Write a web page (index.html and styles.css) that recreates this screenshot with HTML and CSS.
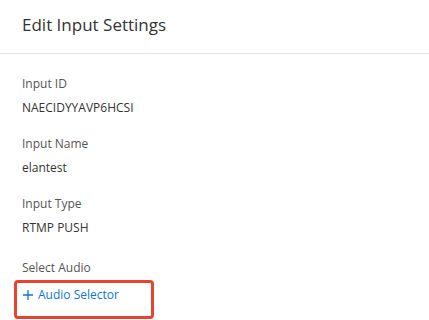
FILE: index.html
```html
<!DOCTYPE html>
<html lang="en">
<head>
    <meta charset="UTF-8">
    <meta name="viewport" content="width=device-width, initial-scale=1.0">
    <title>Edit Input Settings</title>
    <link rel="stylesheet" href="styles.css">
</head>
<body>
    <div class="panel">
        <div class="panel-header">
            <h2 class="panel-title">Edit Input Settings</h2>
        </div>
        <div class="panel-body">
            <div class="field">
                <div class="field-label">Input ID</div>
                <div class="field-value">NAECIDYYAVP6HCSI</div>
            </div>
            <div class="field">
                <div class="field-label">Input Name</div>
                <div class="field-value">elantest</div>
            </div>
            <div class="field">
                <div class="field-label">Input Type</div>
                <div class="field-value">RTMP PUSH</div>
            </div>
            <div class="field field-audio">
                <div class="field-label">Select Audio</div>
                <div class="highlight">
                    <a class="add-link" href="#">
                        <svg class="plus" width="10" height="10" viewBox="0 0 10 10"><path d="M5 0V10M0 5H10" stroke="currentColor" stroke-width="1.3" fill="none"/></svg>
                        Audio Selector
                    </a>
                </div>
            </div>
        </div>
    </div>
</body>
</html>
```

FILE: styles.css
```css
body { margin: 0; background-color: #fff; font-family: "Open Sans", "Noto Sans", sans-serif; color: #333; }
.panel { width: 429px; height: 320px; overflow: hidden; }
.panel-header { height: 53px; border-bottom: 1px solid #e6e6e6; padding: 0 22px; }
.panel-title { margin: 0; padding-top: 13px; font-size: 17px; line-height: 24px; font-weight: 400; color: #333; }
.panel-body { padding: 20px 22px 0 22px; }
.field { margin-bottom: 16px; }
.field-audio { margin-top: 20px; }
.field-label { font-size: 12px; line-height: 20px; color: #555; }
.field-value { font-size: 12px; line-height: 20px; margin-top: 4px; color: #333; }
.highlight { margin: 2px 0 0 -8px; width: 128px; height: 33px; border: 3px solid #e8432d; border-radius: 4px; padding: 0 0 0 6px; }
.add-link { display: flex; align-items: center; gap: 5px; font-size: 12px; line-height: 20px; color: #0a78d2; text-decoration: none; margin-top: 2px; }
.plus { flex: none; }
```
